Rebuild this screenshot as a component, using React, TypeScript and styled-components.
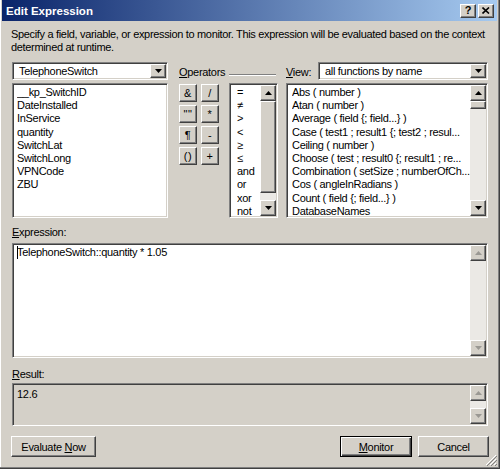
import styled, { createGlobalStyle, css } from "styled-components";

const GlobalStyle = createGlobalStyle`
  html, body {
    margin: 0;
    padding: 0;
    background: #d4d0c8;
  }
  body {
    font-family: "Liberation Sans", Arial, sans-serif;
    font-size: 11px;
    letter-spacing: -0.3px;
    color: #000;
  }
`;

const sunken = css`
  box-sizing: border-box;
  border: 1px solid;
  border-color: #808080 #ffffff #ffffff #808080;
  box-shadow: inset 1px 1px 0 #404040, inset -1px -1px 0 #d4d0c8;
  padding: 1px;
`;

const raised = css`
  box-sizing: border-box;
  border: 1px solid;
  border-color: #ffffff #404040 #404040 #ffffff;
  box-shadow: inset -1px -1px 0 #808080, inset 1px 1px 0 #d4d0c8;
  background: #d4d0c8;
`;

const Window = styled.div`
  position: relative;
  box-sizing: border-box;
  width: 500px;
  height: 469px;
  background: #d4d0c8;
  padding: 0 3px 3px 2px;
  box-shadow: inset -1px -1px 0 #404040, inset -2px -2px 0 #808080,
    inset 1px 0 0 #ffffff;
  display: flex;
  flex-direction: column;
`;

const TitleBar = styled.div`
  height: 21px;
  display: flex;
  align-items: center;
  padding: 0 3px 0 4px;
  background: linear-gradient(to right, #0a246a, #a6caf0);
  color: #fff;
`;

const Title = styled.span`
  flex: 1;
  font-weight: bold;
  font-size: 11.5px;
  letter-spacing: 0;
`;

const CaptionButton = styled.div<{ $gap?: boolean }>`
  ${raised};
  width: 16px;
  height: 14px;
  margin-left: ${(p) => (p.$gap ? "2px" : "0")};
  display: flex;
  align-items: center;
  justify-content: center;
  color: #000;
  font-weight: bold;
  font-size: 11px;
  line-height: 1;
`;

const Body = styled.div`
  flex: 1;
  display: flex;
  flex-direction: column;
  padding: 7px 9px 0 10px;
`;

const Description = styled.p`
  margin: 0 0 0 -1px;
  line-height: 13px;
  letter-spacing: -0.33px;
`;

const Key = styled.span`
  text-decoration: underline;
`;

const PickerGrid = styled.div`
  margin-top: 8px;
  display: grid;
  grid-template-columns: 167px 50px 57px 202px;
  grid-template-rows: 18px 135px;
  row-gap: 3px;
`;

const Combo = styled.div<{ $width: number }>`
  ${sunken};
  width: ${(p) => p.$width}px;
  height: 18px;
  background: #fff;
  display: flex;
  align-items: stretch;
`;

const ComboText = styled.span`
  flex: 1;
  padding-left: 5px;
  line-height: 14px;
  white-space: nowrap;
  overflow: hidden;
`;

const ArrowButton = styled.div<{ $width?: number; $height?: number }>`
  ${raised};
  width: ${(p) => p.$width ?? 16}px;
  height: ${(p) => (p.$height ? `${p.$height}px` : "auto")};
  flex-shrink: 0;
  display: flex;
  align-items: center;
  justify-content: center;
`;

const OperatorsHeader = styled.div`
  grid-column: 2 / 4;
  display: flex;
  align-items: center;
  padding-right: 10px;
  line-height: 13px;
  padding-top: 3px;
`;

const Rule = styled.div`
  flex: 1;
  height: 0;
  border-top: 1px solid #808080;
  border-bottom: 1px solid #ffffff;
  margin: 5px 0 0 4px;
`;

const ViewRow = styled.div`
  display: flex;
  align-items: center;
  justify-content: space-between;
`;

const ViewLabel = styled.span`
  padding-top: 2px;
`;

const ListBox = styled.div<{ $width?: number }>`
  ${sunken};
  width: ${(p) => (p.$width ? `${p.$width}px` : "100%")};
  height: 135px;
  background: #fff;
  display: flex;
`;

const ListItems = styled.div<{ $pad: number }>`
  flex: 1;
  min-width: 0;
  padding: 1px 0 0 ${(p) => p.$pad}px;
  overflow: hidden;
`;

const ListItem = styled.div`
  line-height: 13.2px;
  white-space: nowrap;
  overflow: hidden;
`;

const OpButtons = styled.div`
  display: grid;
  grid-template-columns: 18px 18px;
  grid-auto-rows: 18px;
  column-gap: 4px;
  row-gap: 3px;
  align-content: start;
  padding-top: 1px;
`;

const OpButton = styled.div`
  ${raised};
  display: flex;
  align-items: center;
  justify-content: center;
  font-size: 11px;
  letter-spacing: 0.5px;
`;

const ScrollBar = styled.div`
  width: 16px;
  flex-shrink: 0;
  display: flex;
  flex-direction: column;
`;

const ScrollTrack = styled.div`
  flex: 1;
  background: #ebe9e5;
  display: flex;
  flex-direction: column;
`;

const Thumb = styled.div<{ $size: number }>`
  ${raised};
  height: ${(p) => p.$size}px;
  flex-shrink: 0;
`;

const FieldLabel = styled.div<{ $top: number }>`
  margin-top: ${(p) => p.$top}px;
  line-height: 13px;
`;

const TextBox = styled.div<{ $height: number; $readOnly?: boolean }>`
  ${sunken};
  height: ${(p) => p.$height}px;
  background: ${(p) => (p.$readOnly ? "#d4d0c8" : "#fff")};
  display: flex;
`;

const TextContent = styled.div`
  flex: 1;
  padding: 1px 3px;
  line-height: 13px;
`;

const Caret = styled.span`
  display: inline-block;
  width: 1px;
  height: 13px;
  background: #000;
  vertical-align: -3px;
  margin-right: -1px;
`;

const ButtonRow = styled.div`
  margin-top: 10px;
  display: flex;
  align-items: center;
`;

const PushButton = styled.div<{ $width: number; $default?: boolean }>`
  ${raised};
  width: ${(p) => p.$width}px;
  height: 21px;
  display: flex;
  align-items: center;
  justify-content: center;
  ${(p) =>
    p.$default &&
    css`
      border: 1px solid #000;
      box-shadow: inset 1px 1px 0 #ffffff, inset -1px -1px 0 #404040,
        inset -2px -2px 0 #808080;
    `}
`;

const Spacer = styled.div`
  flex: 1;
`;

const Grip = styled.svg`
  position: absolute;
  right: 3px;
  bottom: 3px;
`;

const Arrow = ({ down, dim }: { down?: boolean; dim?: boolean }) => (
  <svg width="7" height="4" viewBox="0 0 7 4">
    <polygon
      points={down ? "0,0 7,0 3.5,4" : "0,4 7,4 3.5,0"}
      fill={dim ? "#9a9893" : "#000"}
    />
  </svg>
);

type BarProps = { thumbTop?: number; thumbSize?: number; dim?: boolean };

const VScroll = ({ thumbTop = 0, thumbSize, dim }: BarProps) => (
  <ScrollBar>
    <ArrowButton $height={16}>
      <Arrow dim={dim} />
    </ArrowButton>
    <ScrollTrack>
      {thumbSize ? (
        <Thumb $size={thumbSize} style={{ marginTop: thumbTop }} />
      ) : null}
    </ScrollTrack>
    <ArrowButton $height={16}>
      <Arrow down dim={dim} />
    </ArrowButton>
  </ScrollBar>
);

const fields = [
  "__kp_SwitchID",
  "DateInstalled",
  "InService",
  "quantity",
  "SwitchLat",
  "SwitchLong",
  "VPNCode",
  "ZBU",
];

const operatorButtons = ["&", "/", "\"\"", "*", "¶", "-", "()", "+"];

const operators = ["=", "≠", ">", "<", "≥", "≤", "and", "or", "xor", "not"];

const functions = [
  "Abs ( number )",
  "Atan ( number )",
  "Average ( field {; field...} )",
  "Case ( test1 ; result1 {; test2 ; resul...",
  "Ceiling ( number )",
  "Choose ( test ; result0 {; result1 ; re...",
  "Combination ( setSize ; numberOfCh...",
  "Cos ( angleInRadians )",
  "Count ( field {; field...} )",
  "DatabaseNames",
];

export default function App() {
  return (
    <>
      <GlobalStyle />
      <Window>
        <TitleBar>
          <Title>Edit Expression</Title>
          <CaptionButton>?</CaptionButton>
          <CaptionButton $gap>
            <svg width="8" height="7" viewBox="0 0 8 7">
              <path d="M0.5 0.5 L7 6.5 M7 0.5 L0.5 6.5" stroke="#000" strokeWidth="1.6" />
            </svg>
          </CaptionButton>
        </TitleBar>
        <Body>
          <Description>
            Specify a field, variable, or expression to monitor. This expression
            will be evaluated based on the context determined at runtime.
          </Description>

          <PickerGrid>
            <Combo $width={156}>
              <ComboText>TelephoneSwitch</ComboText>
              <ArrowButton $width={16}>
                <Arrow down />
              </ArrowButton>
            </Combo>
            <OperatorsHeader>
              <span>
                <Key>O</Key>perators
              </span>
              <Rule />
            </OperatorsHeader>
            <ViewRow>
              <ViewLabel>
                <Key>V</Key>iew:
              </ViewLabel>
              <Combo $width={170}>
                <ComboText>all functions by name</ComboText>
                <ArrowButton $width={16}>
                  <Arrow down />
                </ArrowButton>
              </Combo>
            </ViewRow>

            <ListBox $width={156}>
              <ListItems $pad={3}>
                {fields.map((f) => (
                  <ListItem key={f}>{f}</ListItem>
                ))}
              </ListItems>
            </ListBox>
            <OpButtons>
              {operatorButtons.map((o) => (
                <OpButton key={o}>{o}</OpButton>
              ))}
            </OpButtons>
            <ListBox $width={49}>
              <ListItems $pad={6}>
                {operators.map((o) => (
                  <ListItem key={o}>{o}</ListItem>
                ))}
              </ListItems>
              <VScroll thumbSize={92} />
            </ListBox>
            <ListBox>
              <ListItems $pad={4}>
                {functions.map((f) => (
                  <ListItem key={f}>{f}</ListItem>
                ))}
              </ListItems>
              <VScroll thumbSize={8} />
            </ListBox>
          </PickerGrid>

          <FieldLabel $top={8}>
            <Key>E</Key>xpression:
          </FieldLabel>
          <TextBox $height={115} style={{ marginTop: 4 }}>
            <TextContent>
              <Caret />
              TelephoneSwitch::quantity * 1.05
            </TextContent>
            <VScroll dim />
          </TextBox>

          <FieldLabel $top={10}>
            <Key>R</Key>esult:
          </FieldLabel>
          <TextBox $height={43} $readOnly style={{ marginTop: 2 }}>
            <TextContent style={{ paddingTop: 3 }}>12.6</TextContent>
            <VScroll dim />
          </TextBox>

          <ButtonRow>
            <PushButton $width={85} style={{ marginLeft: -1 }}>
              Evaluate&nbsp;<Key>N</Key>ow
            </PushButton>
            <Spacer />
            <PushButton $width={72} $default>
              <Key>M</Key>onitor
            </PushButton>
            <PushButton $width={71} style={{ marginLeft: 6, marginRight: -1 }}>
              Cancel
            </PushButton>
          </ButtonRow>
        </Body>
        <Grip width="12" height="12" viewBox="0 0 12 12">
          <path d="M11 1 L1 11 M11 5 L5 11 M11 9 L9 11" stroke="#ffffff" strokeWidth="1" />
          <path d="M12 2 L2 12 M12 6 L6 12 M12 10 L10 12" stroke="#808080" strokeWidth="1" />
        </Grip>
      </Window>
    </>
  );
}
